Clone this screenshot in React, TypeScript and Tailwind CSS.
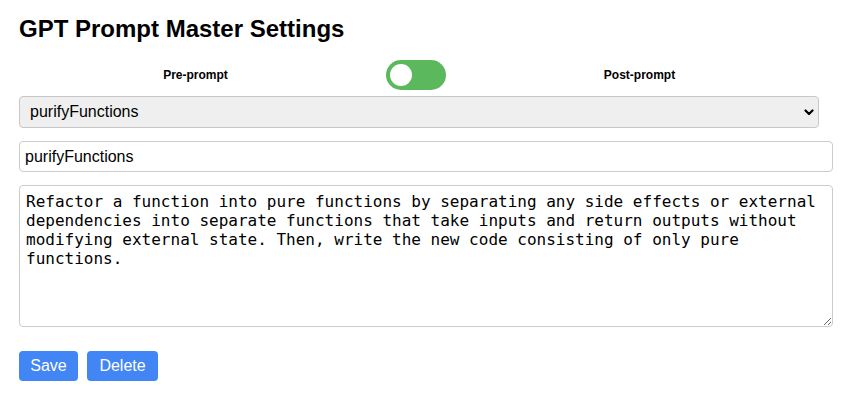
import { useState } from 'react';

const PROMPTS: Record<string, string> = {
  purifyFunctions:
    'Refactor a function into pure functions by separating any side effects or external dependencies into separate functions that take inputs and return outputs without modifying external state. Then, write the new code consisting of only pure functions.',
};

export default function App() {
  const [post, setPost] = useState(false);
  const [selected, setSelected] = useState('purifyFunctions');
  const [name, setName] = useState('purifyFunctions');
  const [text, setText] = useState(PROMPTS.purifyFunctions);

  return (
    <div className="min-h-screen bg-white pl-[19px] pr-[14px] pt-[15px] font-['Liberation_Sans',Arial,sans-serif] text-black">
      <h1 className="text-[24px] leading-[28px] font-bold">GPT Prompt Master Settings</h1>

      {/* Pre / post toggle */}
      <div className="mt-[17px] flex h-[30px] items-center">
        <span className="w-[353px] text-center text-[12px] font-bold">Pre-prompt</span>
        <button
          onClick={() => setPost(p => !p)}
          className="mx-[14px] flex h-[30px] w-[60px] shrink-0 items-center rounded-full bg-[#5cb85c] px-[4px]"
          aria-label="Toggle pre/post prompt"
        >
          <span className={`h-[22px] w-[22px] rounded-full bg-white transition-transform ${post ? 'translate-x-[30px]' : ''}`} />
        </button>
        <span className="w-[359px] text-center text-[12px] font-bold">Post-prompt</span>
      </div>

      {/* Prompt picker */}
      <div className="relative mt-[6px] w-[800px]">
        <select
          value={selected}
          onChange={e => setSelected(e.target.value)}
          className="h-[32px] w-full appearance-none rounded-[4px] border border-[#c8c8c8] bg-[#efefef] pl-[10px] text-[16px] leading-[30px] outline-none"
        >
          <option value="purifyFunctions">purifyFunctions</option>
        </select>
        <svg
          className="pointer-events-none absolute right-[5px] top-[13px]"
          width="10"
          height="7"
          viewBox="0 0 10 7"
          fill="none"
        >
          <path d="M1.5 1.5 L5 5 L8.5 1.5" stroke="#000" strokeWidth="2.2" strokeLinecap="round" strokeLinejoin="round" />
        </svg>
      </div>

      <input
        value={name}
        onChange={e => setName(e.target.value)}
        className="mt-[13px] block h-[31px] w-full rounded-[4px] border border-[#cccccc] bg-white pl-[5px] text-[16px] outline-none"
      />

      <textarea
        value={text}
        onChange={e => setText(e.target.value)}
        className="mt-[13px] block h-[142px] w-full rounded-[4px] border border-[#cccccc] bg-white p-[6px] font-['DejaVu_Sans_Mono',monospace] text-[16px] leading-[normal] outline-none"
      />

      <div className="mt-[24px] flex gap-[9px]">
        <button className="h-[30px] w-[59px] rounded-[4px] bg-[#4285f4] text-center text-[16px] text-white">Save</button>
        <button className="h-[30px] w-[71px] rounded-[4px] bg-[#4285f4] text-center text-[16px] text-white">Delete</button>
      </div>
    </div>
  );
}
